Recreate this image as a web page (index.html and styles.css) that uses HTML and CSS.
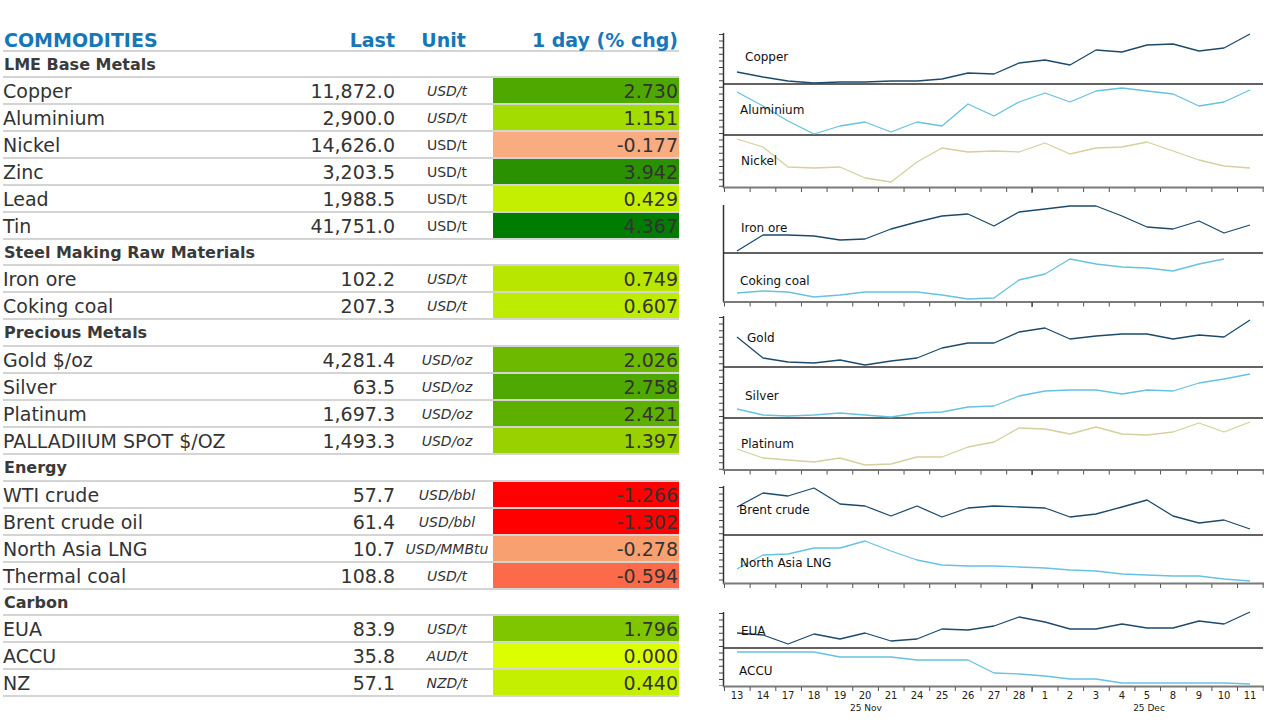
FILE: index.html
```html
<!DOCTYPE html>
<html>
<head>
<meta charset="utf-8">
<link rel="stylesheet" href="styles.css">
</head>
<body>
<div class="page">
  <section class="table-panel">
    <div class="row head">
      <div class="c-name title">COMMODITIES</div>
      <div class="c-last">Last</div>
      <div class="c-unit head-unit">Unit</div>
      <div class="c-chg head-chg">1 day (% chg)</div>
    </div>

    <div class="row section"><div class="c-name">LME Base Metals</div></div>
    <div class="row item"><div class="c-name">Copper</div><div class="c-last">11,872.0</div><div class="c-unit">USD/t</div><div class="c-chg" style="background:#4ea800">2.730</div></div>
    <div class="row item"><div class="c-name">Aluminium</div><div class="c-last">2,900.0</div><div class="c-unit">USD/t</div><div class="c-chg" style="background:#a2dc00">1.151</div></div>
    <div class="row item"><div class="c-name">Nickel</div><div class="c-last">14,626.0</div><div class="c-unit upright">USD/t</div><div class="c-chg" style="background:#f9ac80">-0.177</div></div>
    <div class="row item"><div class="c-name">Zinc</div><div class="c-last">3,203.5</div><div class="c-unit upright">USD/t</div><div class="c-chg" style="background:#2a9100">3.942</div></div>
    <div class="row item"><div class="c-name">Lead</div><div class="c-last">1,988.5</div><div class="c-unit upright">USD/t</div><div class="c-chg" style="background:#c4f000">0.429</div></div>
    <div class="row item"><div class="c-name">Tin</div><div class="c-last">41,751.0</div><div class="c-unit upright">USD/t</div><div class="c-chg" style="background:#007d00">4.367</div></div>

    <div class="row section"><div class="c-name">Steel Making Raw Materials</div></div>
    <div class="row item"><div class="c-name">Iron ore</div><div class="c-last">102.2</div><div class="c-unit">USD/t</div><div class="c-chg" style="background:#b8e600">0.749</div></div>
    <div class="row item"><div class="c-name">Coking coal</div><div class="c-last">207.3</div><div class="c-unit">USD/t</div><div class="c-chg" style="background:#bdec00">0.607</div></div>

    <div class="row section tall"><div class="c-name">Precious Metals</div></div>
    <div class="row item"><div class="c-name">Gold $/oz</div><div class="c-last">4,281.4</div><div class="c-unit">USD/oz</div><div class="c-chg" style="background:#6cb900">2.026</div></div>
    <div class="row item"><div class="c-name">Silver</div><div class="c-last">63.5</div><div class="c-unit">USD/oz</div><div class="c-chg" style="background:#4fa800">2.758</div></div>
    <div class="row item"><div class="c-name">Platinum</div><div class="c-last">1,697.3</div><div class="c-unit">USD/oz</div><div class="c-chg" style="background:#5eb000">2.421</div></div>
    <div class="row item"><div class="c-name">PALLADIIUM SPOT $/OZ</div><div class="c-last">1,493.3</div><div class="c-unit">USD/oz</div><div class="c-chg" style="background:#98d000">1.397</div></div>

    <div class="row section tall"><div class="c-name">Energy</div></div>
    <div class="row item"><div class="c-name">WTI crude</div><div class="c-last">57.7</div><div class="c-unit">USD/bbl</div><div class="c-chg" style="background:#ff0000">-1.266</div></div>
    <div class="row item"><div class="c-name">Brent crude oil</div><div class="c-last">61.4</div><div class="c-unit">USD/bbl</div><div class="c-chg" style="background:#ff0000">-1.302</div></div>
    <div class="row item"><div class="c-name">North Asia LNG</div><div class="c-last">10.7</div><div class="c-unit">USD/MMBtu</div><div class="c-chg" style="background:#f8a070">-0.278</div></div>
    <div class="row item"><div class="c-name">Thermal coal</div><div class="c-last">108.8</div><div class="c-unit">USD/t</div><div class="c-chg" style="background:#fd6a4a">-0.594</div></div>

    <div class="row section"><div class="c-name">Carbon</div></div>
    <div class="row item"><div class="c-name">EUA</div><div class="c-last">83.9</div><div class="c-unit">USD/t</div><div class="c-chg" style="background:#80c600">1.796</div></div>
    <div class="row item"><div class="c-name">ACCU</div><div class="c-last">35.8</div><div class="c-unit">AUD/t</div><div class="c-chg" style="background:#dcff00">0.000</div></div>
    <div class="row item"><div class="c-name">NZ</div><div class="c-last">57.1</div><div class="c-unit">NZD/t</div><div class="c-chg" style="background:#c4ef00">0.440</div></div>
  </section>

  <svg class="charts" width="565" height="720" viewBox="715 0 565 720" xmlns="http://www.w3.org/2000/svg">
    <g class="yticks">
      <line x1="721" y1="34" x2="721" y2="187"/>
      <line x1="721" y1="317" x2="721" y2="470"/>
      <line x1="721" y1="487" x2="721" y2="583"/>
      <line x1="721" y1="613" x2="721" y2="686"/>
    </g>
    <g class="axis">
      <line x1="723.5" y1="33" x2="723.5" y2="188"/>
      <line x1="723.5" y1="205" x2="723.5" y2="302"/>
      <line x1="723.5" y1="316" x2="723.5" y2="471"/>
      <line x1="723.5" y1="486" x2="723.5" y2="584"/>
      <line x1="723.5" y1="612" x2="723.5" y2="687"/>
    </g>
    <g class="sep">
      <line x1="723" y1="84" x2="1263" y2="84"/>
      <line x1="723" y1="135" x2="1263" y2="135"/>
      <line x1="723" y1="253" x2="1263" y2="253"/>
      <line x1="723" y1="367" x2="1263" y2="367"/>
      <line x1="723" y1="418" x2="1263" y2="418"/>
      <line x1="723" y1="535" x2="1263" y2="535"/>
      <line x1="723" y1="648" x2="1263" y2="648"/>
    </g>
    <g class="base">
      <line x1="723" y1="187.5" x2="1264" y2="187.5"/>
      <line x1="723" y1="302" x2="1264" y2="302"/>
      <line x1="723" y1="470" x2="1264" y2="470"/>
      <line x1="723" y1="583.5" x2="1264" y2="583.5"/>
      <line x1="723" y1="686.5" x2="1264" y2="686.5"/>
    </g>
    <g class="xticks">
      <line x1="724" y1="190" x2="1264" y2="190"/>
      <line x1="724" y1="304.5" x2="1264" y2="304.5"/>
      <line x1="724" y1="472.5" x2="1264" y2="472.5"/>
      <line x1="724" y1="586" x2="1264" y2="586"/>
      <line x1="724" y1="689" x2="1264" y2="689"/>
    </g>
    <g class="mtick">
      <line x1="1032" y1="188" x2="1032" y2="193"/>
      <line x1="1032" y1="302" x2="1032" y2="307"/>
      <line x1="1032" y1="470" x2="1032" y2="475"/>
      <line x1="1032" y1="584" x2="1032" y2="589"/>
      <line x1="1032" y1="687" x2="1032" y2="692"/>
    </g>

    <polyline class="s-navy" points="737,72 763,77 788,81 814,83 840,82 865,82 891,81 917,81 942,79 968,73 994,74 1019,63 1045,60 1070,65 1096,50 1122,52 1147,45 1173,44 1199,51 1224,48 1250,34"/>
    <polyline class="s-blue" points="737,92 763,106 788,121 814,134 840,126 865,122 891,132 917,122 942,126 968,104 994,116 1019,102 1045,93 1070,102 1096,91 1122,88 1147,91 1173,94 1199,106 1224,102 1250,90"/>
    <polyline class="s-khaki" points="737,139 763,147 788,167 814,168 840,167 865,178 891,182 917,162 942,148 968,152 994,151 1019,152 1045,143 1070,154 1096,148 1122,147 1147,142 1173,151 1199,160 1224,166 1250,168"/>
    <polyline class="s-navy" points="737,251 763,235 788,235 814,236 840,240 865,239 891,229 917,222 942,216 968,214 994,226 1019,212 1045,209 1070,206 1096,206 1122,216 1147,227 1173,229 1199,221 1224,233 1250,225"/>
    <polyline class="s-blue" points="737,293 763,291 788,292 814,297 840,295 865,292 891,292 917,292 942,295 968,299 994,298 1019,280 1045,274 1070,259 1096,264 1122,267 1147,268 1173,271 1199,264 1224,259"/>
    <polyline class="s-navy" points="737,337 763,358 788,362 814,363 840,360 865,365 891,361 917,358 942,348 968,343 994,343 1019,332 1045,328 1070,339 1096,336 1122,334 1147,334 1173,339 1199,335 1224,337 1250,320"/>
    <polyline class="s-blue" points="737,409 763,415 788,416 814,415 840,413 865,415 891,417 917,413 942,412 968,407 994,406 1019,396 1045,391 1070,390 1096,390 1122,394 1147,390 1173,391 1199,383 1224,379 1250,374"/>
    <polyline class="s-khaki" points="737,449 763,458 788,460 814,462 840,458 865,465 891,464 917,457 942,457 968,447 994,442 1019,428 1045,429 1070,434 1096,427 1122,434 1147,435 1173,432 1199,423 1224,432 1250,422"/>
    <polyline class="s-navy" points="737,507 763,493 788,496 814,488 840,504 865,506 891,516 917,506 942,517 968,508 994,506 1019,507 1045,508 1070,517 1096,514 1122,507 1147,500 1173,516 1199,523 1224,520 1250,529"/>
    <polyline class="s-blue" points="737,569 763,555 788,554 814,548 840,548 865,541 891,551 917,560 942,565 968,566 994,566 1019,567 1045,568 1070,570 1096,571 1122,574 1147,575 1173,576 1199,576 1224,579 1250,581"/>
    <polyline class="s-navy" points="737,633 763,635 788,644 814,634 840,639 865,633 891,641 917,639 942,629 968,630 994,626 1019,617 1045,622 1070,629 1096,629 1122,624 1147,628 1173,628 1199,621 1224,624 1250,612"/>
    <polyline class="s-blue" points="737,652 763,652 788,652 814,652 840,657 865,657 891,657 917,660 942,660 968,660 994,673 1019,674 1045,676 1070,679 1096,679 1122,683 1147,683 1173,683 1199,683 1224,683 1250,684"/>

    <g class="lbl">
      <text x="745" y="61">Copper</text>
      <text x="740" y="114">Aluminium</text>
      <text x="741" y="165">Nickel</text>
      <text x="741" y="232">Iron ore</text>
      <text x="740" y="285">Coking coal</text>
      <text x="747" y="342">Gold</text>
      <text x="745" y="400">Silver</text>
      <text x="741" y="448">Platinum</text>
      <text x="739" y="514">Brent crude</text>
      <text x="740" y="567">North Asia LNG</text>
      <text x="741" y="635">EUA</text>
      <text x="739" y="675">ACCU</text>
    </g>

    <g class="xlbl">
      <text x="737" y="699">13</text>
      <text x="763" y="699">14</text>
      <text x="788" y="699">17</text>
      <text x="814" y="699">18</text>
      <text x="840" y="699">19</text>
      <text x="865" y="699">20</text>
      <text x="891" y="699">21</text>
      <text x="917" y="699">24</text>
      <text x="942" y="699">25</text>
      <text x="968" y="699">26</text>
      <text x="994" y="699">27</text>
      <text x="1019" y="699">28</text>
      <text x="1045" y="699">1</text>
      <text x="1070" y="699">2</text>
      <text x="1096" y="699">3</text>
      <text x="1122" y="699">4</text>
      <text x="1147" y="699">5</text>
      <text x="1173" y="699">8</text>
      <text x="1199" y="699">9</text>
      <text x="1224" y="699">10</text>
      <text x="1250" y="699">11</text>
    </g>
    <g class="mlbl">
      <text x="866" y="711">25 Nov</text>
      <text x="1149" y="711">25 Dec</text>
    </g>
  </svg>
</div>
</body>
</html>
```

FILE: styles.css
```css
html, body {
  margin: 0;
  padding: 0;
  background: #ffffff;
}

body {
  font-family: "DejaVu Sans", Verdana, sans-serif;
  color: #333333;
}

.page {
  display: flex;
  width: 1280px;
  height: 720px;
  overflow: hidden;
}

.table-panel {
  width: 712px;
  padding: 29px 0 0 3px;
  flex: none;
}

.row {
  display: grid;
  grid-template-columns: 297px 101px 92px 186px;
  width: 676px;
  box-sizing: border-box;
  border-bottom: 2px solid #d4d4d4;
  align-items: stretch;
}

.row > div {
  display: flex;
  align-items: center;
  white-space: nowrap;
}

.head {
  height: 23px;
  font-weight: bold;
  font-size: 19px;
  color: #1677b8;
}

.section {
  height: 26px;
  font-weight: bold;
  font-size: 16px;
  color: #3a3a3a;
}

.section.tall {
  height: 27px;
}

.section .c-name {
  padding-left: 1px;
  grid-column: 1 / 5;
}

.item {
  height: 27px;
  font-size: 19px;
}

.c-name {
  padding-left: 0;
}

.title {
  padding-left: 1px;
}

.c-last {
  justify-content: flex-end;
  padding-right: 6px;
}

.c-unit {
  justify-content: center;
  font-style: italic;
  font-size: 14px;
}

.c-unit.upright {
  font-style: normal;
}

.head .c-unit.head-unit {
  font-style: normal;
  font-size: 19px;
  padding-right: 7px;
}

.c-chg {
  justify-content: flex-end;
  padding-right: 1px;
}

.head-chg {
  padding-right: 1px;
}

.charts {
  flex: none;
  display: block;
}

.yticks line {
  stroke: #444444;
  stroke-width: 4;
  stroke-dasharray: 1 5.6;
}

.axis line {
  stroke: #333333;
  stroke-width: 1.5;
}

.sep line {
  stroke: #2e2e2e;
  stroke-width: 1.6;
}

.base line {
  stroke: #7a7a7a;
  stroke-width: 2;
}

.xticks line {
  stroke: #555555;
  stroke-width: 4;
  stroke-dasharray: 1 24.65;
}

.mtick line {
  stroke: #444444;
  stroke-width: 1.2;
}

.s-navy, .s-blue, .s-khaki {
  fill: none;
  stroke-width: 1.3;
  stroke-linejoin: round;
}

.s-navy { stroke: #1d4a6b; }
.s-blue { stroke: #66c2e0; }
.s-khaki { stroke: #d6cf9e; }

.lbl text {
  font-family: "DejaVu Sans", Verdana, sans-serif;
  font-size: 12px;
  fill: #111111;
}

.xlbl text {
  font-family: "DejaVu Sans", Verdana, sans-serif;
  font-size: 10px;
  fill: #222222;
  text-anchor: middle;
}

.mlbl text {
  font-family: "DejaVu Sans", Verdana, sans-serif;
  font-size: 9px;
  fill: #222222;
  text-anchor: middle;
}
```
